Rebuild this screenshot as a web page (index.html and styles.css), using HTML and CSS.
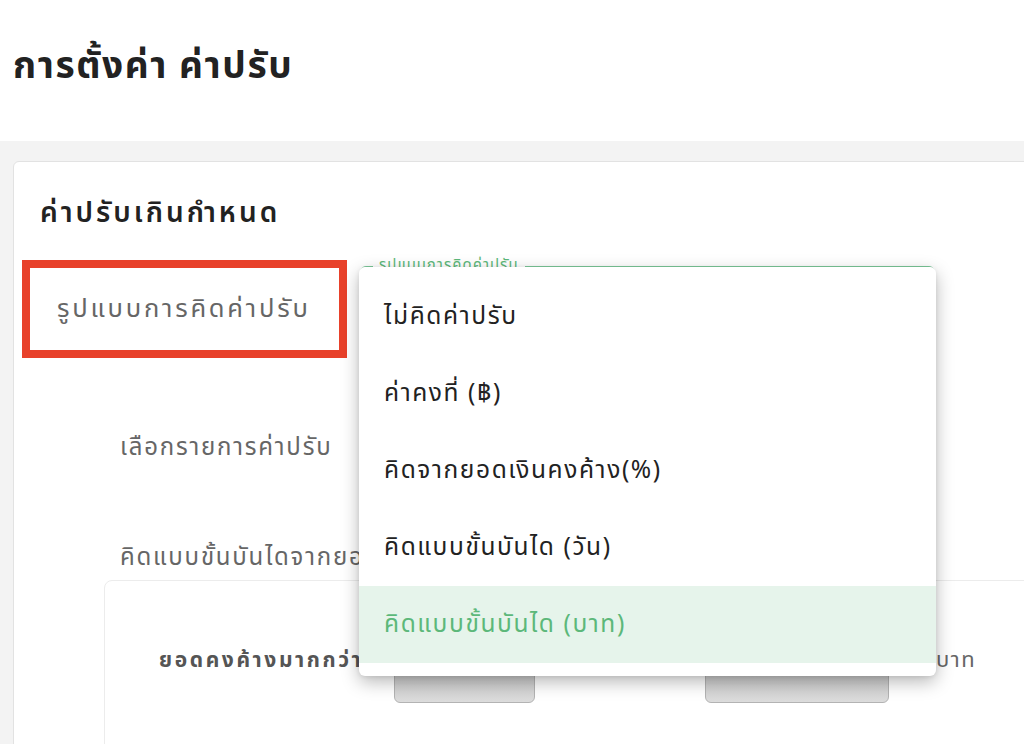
FILE: index.html
```html
<!DOCTYPE html>
<html lang="th">
<head>
    <meta charset="UTF-8">
    <title>การตั้งค่า ค่าปรับ</title>
    <link rel="stylesheet" href="styles.css">
</head>
<body>
    <header class="page-header">
        <h1>การตั้งค่า ค่าปรับ</h1>
    </header>

    <main class="page-body">
        <section class="card">
            <h2>ค่าปรับเกินกำหนด</h2>

            <div class="field-row">
                <div class="field-label highlight">รูปแบบการคิดค่าปรับ</div>
                <div class="select-field">
                    <span class="legend">รูปแบบการคิดค่าปรับ</span>
                    <ul class="menu">
                        <li>ไม่คิดค่าปรับ</li>
                        <li>ค่าคงที่ (฿)</li>
                        <li>คิดจากยอดเงินคงค้าง(%)</li>
                        <li>คิดแบบขั้นบันได (วัน)</li>
                        <li class="selected">คิดแบบขั้นบันได (บาท)</li>
                    </ul>
                </div>
            </div>

            <div class="sub-label first">เลือกรายการค่าปรับ</div>
            <div class="sub-label">คิดแบบขั้นบันไดจากยอด</div>

            <div class="step-box">
                <div class="step-row">
                    <div class="step-label">ยอดคงค้างมากกว่า</div>
                    <div class="step-input small"></div>
                    <div class="step-gap"></div>
                    <div class="step-input"></div>
                    <div class="step-unit">บาท</div>
                </div>
            </div>
        </section>
    </main>
</body>
</html>
```

FILE: styles.css
```css
body {
    margin: 0;
    font-family: "Noto Sans Thai", "Noto Sans", "DejaVu Sans", sans-serif;
    color: #222;
    background-color: #f3f3f3;
    overflow: hidden;
    height: 744px;
}

.page-header {
    background-color: white;
    height: 141px;
    padding: 0 13px;
    box-sizing: border-box;
}

h1 {
    margin: 0;
    padding-top: 43px;
    font-size: 37px;
    line-height: 48px;
    font-weight: 700;
    letter-spacing: 1.6px;
    color: #222;
}

.page-body {
    padding: 20px 0 0 13px;
}

.card {
    background-color: white;
    border: 1px solid #e2e2e2;
    border-radius: 6px;
    margin-right: -30px;
    padding: 32px 0 0 26px;
    height: 700px;
}

h2 {
    margin: 0;
    font-size: 28px;
    line-height: 40px;
    font-weight: 600;
    letter-spacing: 3px;
    color: #222;
}

.field-row {
    display: flex;
    align-items: flex-start;
    margin-top: 26px;
}

.field-label {
    font-size: 25.5px;
    letter-spacing: 2.8px;
    color: #666;
}

.highlight {
    margin-left: -18px;
    width: 325px;
    height: 98px;
    box-sizing: border-box;
    border: 8px solid #e8412a;
    padding-left: 27px;
    display: flex;
    align-items: center;
}

.select-field {
    position: relative;
    margin: 6px 0 0 13px;
    width: 575px;
    height: 56px;
    border: 1px solid #7cc99a;
    border-radius: 6px;
    box-sizing: border-box;
}

.legend {
    position: absolute;
    top: -11px;
    left: 12px;
    padding: 0 6px;
    background-color: white;
    font-size: 15px;
    line-height: 20px;
    letter-spacing: 1px;
    color: #5cb87a;
}

.menu {
    position: absolute;
    top: 0;
    left: -2px;
    width: 577px;
    margin: 0;
    padding: 11px 0 13px;
    list-style: none;
    background-color: white;
    border-radius: 6px;
    box-shadow: 0 6px 18px rgba(0,0,0,0.28), 0 1px 4px rgba(0,0,0,0.08);
    z-index: 10;
}

.menu li {
    height: 77px;
    display: flex;
    align-items: center;
    padding-left: 25px;
    font-size: 24.5px;
    letter-spacing: 1.6px;
    color: #222;
}

.menu li.selected {
    background-color: #e6f4eb;
    color: #5cb87a;
}

.sub-label {
    margin: 70px 0 0 80px;
    font-size: 24px;
    line-height: 40px;
    letter-spacing: 1.8px;
    color: #666;
}

.step-box {
    margin: 2px 0 0 64px;
    border: 1px solid #ececec;
    border-radius: 8px;
    padding: 60px 0 0 54px;
    height: 300px;
}

.step-row {
    display: flex;
    align-items: flex-start;
}

.step-label {
    width: 235px;
    font-size: 21px;
    line-height: 40px;
    font-weight: 700;
    letter-spacing: 2.6px;
    color: #555;
    white-space: nowrap;
}

.step-input {
    margin-top: 22px;
    width: 184px;
    height: 40px;
    box-sizing: border-box;
    border: 1px solid #b3b3b3;
    border-radius: 6px;
    background: linear-gradient(#c4c4c4, #dcdcdc);
}

.step-input.small {
    width: 141px;
}

.step-gap {
    width: 170px;
}

.step-unit {
    margin-left: 47px;
    font-size: 22px;
    line-height: 40px;
    letter-spacing: 1.5px;
    color: #666;
}
```
